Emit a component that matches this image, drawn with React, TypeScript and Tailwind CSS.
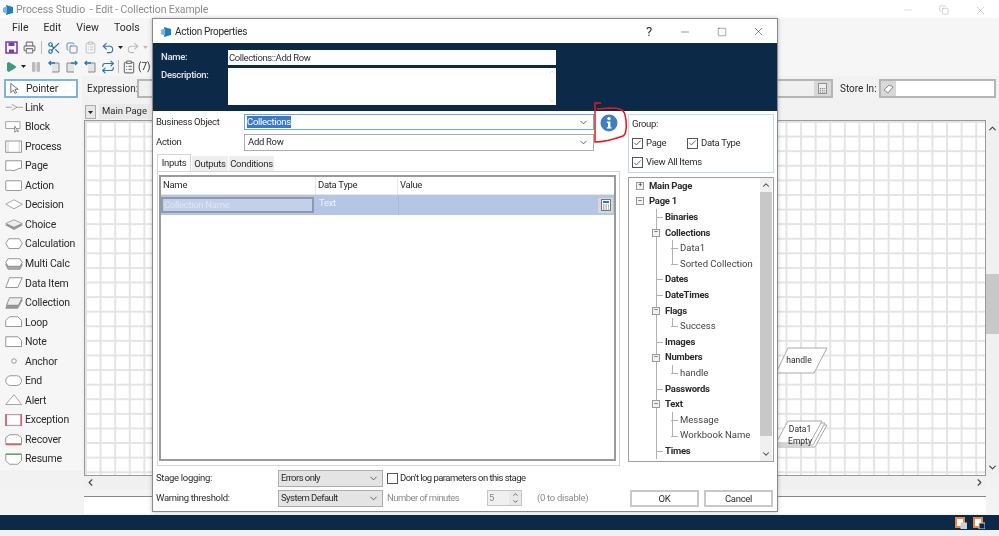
import React from 'react';
import { ChevronDown, ChevronUp, ChevronLeft, ChevronRight, Check, Minus, Square, X, Printer, Scissors, Copy, ClipboardList, Undo2, Redo2, Play, Pause, Repeat } from 'lucide-react';

const ink = '#2b2b2b';

const BpLogo = () => (
    <svg width="12" height="12" viewBox="0 0 12 12" className="shrink-0">
        <path d="M4 1 L11 3 L11 9 L4 11 Z" fill="#1f7fb8" />
        <path d="M1 4 L5 2 L5 10 L1 8 Z" fill="#7fb4d6" />
    </svg>
);

const shapes: Record<string, React.ReactNode> = {
    Link: <><path d="M1 8H9M16 8H24" stroke="#888" fill="none" /><path d="M9 4 L16 8 L9 12" stroke="#888" fill="none" /></>,
    Block: <><rect x="1" y="2" width="19" height="9" fill="#fff" stroke="#888" /><path d="M13 8 L13 16 L15 14 L18 15Z" fill="#fff" stroke="#666" /></>,
    Process: <><rect x="1" y="1" width="21" height="15" fill="#fff" stroke="#777" /><path d="M4 1V16M19 1V16" stroke="#bbb" /></>,
    Page: <path d="M1 2H22V12C17 11 15 16 10 15C6 14 4 15 1 15Z" fill="#fff" stroke="#777" />,
    Action: <rect x="1" y="2" width="21" height="13" rx="1" fill="#fff" stroke="#777" />,
    Decision: <path d="M1 8 L12 2 L23 8 L12 14Z" fill="#fff" stroke="#888" />,
    Choice: <><path d="M1 9 L12 4 L23 9 L12 15Z" fill="#999" stroke="#888" /><path d="M1 7 L12 2 L23 7 L12 12Z" fill="#eee" stroke="#888" /></>,
    Calculation: <path d="M5 2H19L23 8L19 15H5L1 8Z" fill="#fff" stroke="#777" />,
    'Multi Calc': <><path d="M4 5H20L23 10L20 16H4L1 10Z" fill="#aaa" stroke="#888" /><path d="M4 2H20L23 7L20 12H4L1 7Z" fill="#fff" stroke="#777" /></>,
    'Data Item': <path d="M6 2H23L17 15H1Z" fill="#fff" stroke="#777" />,
    Collection: <><path d="M6 5H23L17 16H1Z" fill="#999" stroke="#888" /><path d="M6 2H23L18 12H2Z" fill="#eee" stroke="#777" /></>,
    Loop: <path d="M6 2H17L22 7V15H1V7Z" fill="#fff" stroke="#777" />,
    Note: <path d="M1 2H17L22 7V15H1Z" fill="#fff" stroke="#777" />,
    Anchor: <circle cx="12" cy="9" r="3" fill="#fff" stroke="#777" />,
    End: <rect x="1" y="2" width="21" height="13" rx="6.5" fill="#fff" stroke="#777" />,
    Alert: <path d="M12 2L22 15H1Z" fill="#fff" stroke="#888" />,
    Exception: <><rect x="1" y="2" width="21" height="14" fill="#fff" stroke="#777" /><path d="M1.5 1V17M21.5 1V17" stroke="#e05561" strokeWidth="2" /></>,
    Recover: <><path d="M6 2H17L22 6V14H1V6Z" fill="#fff" stroke="#777" /><path d="M1 15H22" stroke="#e05561" strokeWidth="2" /></>,
    Resume: <><path d="M1 3H22V11L17 16H6L1 11Z" fill="#fff" stroke="#777" /><path d="M1 2.5H22" stroke="#5aa469" strokeWidth="2" /></>,
};

const paletteItems = Object.keys(shapes);

const Palette = () => (
    <div className="w-[82px] shrink-0 bg-[#f6f6f6] flex flex-col pt-[3px] h-[394px] text-[10.5px] tracking-[-0.2px]">
        <div className="mx-[4px] h-[19px] w-[74px] shrink-0 border-2 border-[#7fb4e0] bg-white flex items-center pl-[4px] gap-[7px]">
            <svg width="9" height="13" viewBox="0 0 11 14"><path d="M1 1V12L4 9L6 13L8 12L6 8H10Z" fill="#fff" stroke="#555" /></svg>
            Pointer
        </div>
        {paletteItems.map((name) => (
            <div key={name} className="h-[19.53px] shrink-0 flex items-center pl-[5px] gap-[2px] whitespace-nowrap">
                <svg width="18" height="14" viewBox="0 0 24 18" className="shrink-0">{shapes[name]}</svg>
                <span>{name}</span>
            </div>
        ))}
    </div>
);

const ToolIcon = ({ children, className = '' }: { children: React.ReactNode; className?: string }) => (
    <span className={`w-[16px] h-[16px] flex items-center justify-center shrink-0 ${className}`}>{children}</span>
);

const Caret = ({ fill = '#222' }: { fill?: string }) => (
    <svg width="5" height="3" viewBox="0 0 5 3" className="shrink-0"><path d="M0 0H5L2.5 3Z" fill={fill} /></svg>
);

const StepIcon = ({ flip = false }: { flip?: boolean }) => (
    <svg width="14" height="14" viewBox="0 0 14 14" className={flip ? '-scale-x-100' : ''}>
        <path d="M5 3H12V12H5" fill="#e4e4e4" stroke="#888" />
        <path d="M8 3H2M4 1L2 3L4 5" fill="none" stroke="#2778b5" strokeWidth="1.4" />
    </svg>
);

const Toolbars = () => (
    <div className="bg-[#f6f6f6] h-[38px] pl-[3px] flex flex-col">
        <div className="h-[19px] flex items-center gap-[2px]">
            <ToolIcon>
                <svg width="13" height="13" viewBox="0 0 13 13"><path d="M1 1H12V12H1Z" fill="none" stroke="#7a3fa8" strokeWidth="1.6" /><path d="M3.5 1.5H9.5V5H3.5Z M4 8.5H9V12H4Z" fill="#7a3fa8" /></svg>
            </ToolIcon>
            <ToolIcon><Printer size={13} color="#777" /></ToolIcon>
            <span className="w-px h-[13px] bg-[#bbb] mx-[2px]" />
            <ToolIcon><Scissors size={14} color="#1f6fa8" /></ToolIcon>
            <ToolIcon><Copy size={12} color="#6f8aa8" /></ToolIcon>
            <ToolIcon><ClipboardList size={13} color="#c4c4c4" /></ToolIcon>
            <ToolIcon><Undo2 size={14} color="#2778b5" /></ToolIcon>
            <Caret />
            <ToolIcon><Redo2 size={14} color="#bcbcbc" /></ToolIcon>
            <Caret fill="#bbb" />
        </div>
        <div className="h-[19px] flex items-center gap-[2px]">
            <ToolIcon><Play size={12} color="#3f9a7d" fill="#3f9a7d" /></ToolIcon>
            <Caret />
            <ToolIcon><Pause size={12} color="#bbb" fill="#bbb" /></ToolIcon>
            <ToolIcon><StepIcon /></ToolIcon>
            <ToolIcon><StepIcon flip /></ToolIcon>
            <ToolIcon><StepIcon /></ToolIcon>
            <ToolIcon><Repeat size={14} color="#2778b5" /></ToolIcon>
            <span className="w-px h-[13px] bg-[#bbb]" />
            <ToolIcon><ClipboardList size={14} color="#777" /></ToolIcon>
            <span className="text-[10px] -ml-[1px]">(7)</span>
        </div>
    </div>
);

const Stage = ({ children, className }: { children: React.ReactNode; className: string }) => (
    <div className={`absolute text-[8.5px] text-center leading-[12px] ${className}`}>{children}</div>
);

const Canvas = () => (
    <div className="flex-1 flex flex-col min-w-0">
        <div className="h-[24px] flex items-center pl-[5px] pr-[3px] text-[10px] whitespace-nowrap">
            <span className="w-[50px]">Expression:</span>
            <div className="flex-1 h-[19px] border-2 border-[#b5b5b5] bg-[#f0f0f0] flex justify-end">
                <span className="w-[17px] bg-[#d8d8d8] flex items-center justify-center">
                    <svg width="9" height="11" viewBox="0 0 10 12"><rect x="0.5" y="0.5" width="9" height="11" fill="#eee" stroke="#888" /><path d="M2 6H8M2 8H8M2 10H8" stroke="#777" strokeDasharray="1.5 1" /></svg>
                </span>
            </div>
            <span className="w-[46px] pl-[7px]">Store In:</span>
            <div className="w-[117px] h-[19px] border-2 border-[#b5b5b5] bg-white">
                <div className="w-[15px] h-full bg-[#d8d8d8] flex items-center justify-center">
                    <svg width="11" height="11" viewBox="0 0 11 11"><path d="M1 7L6 2L10 4L5 10Z" fill="#fff" stroke="#888" /></svg>
                </div>
            </div>
        </div>
        <div className="h-[20px] flex items-end pl-[3px] gap-[3px] pb-[1px] text-[9.5px]">
            <div className="w-[11px] h-[14px] bg-[#e6e6e6] border border-[#aaa] flex items-center justify-center">
                <Caret />
            </div>
            <div className="w-[51px] h-[15px] bg-[#e9e9e9] text-center">Main Page</div>
        </div>
        <div className="flex h-[356px]">
            <div className="relative ml-[2px] w-[902px] h-[356px] border border-[#999] bg-white bg-[linear-gradient(to_right,#e4e4e4_2px,transparent_2px),linear-gradient(to_bottom,#e4e4e4_2px,transparent_2px)] bg-size-[14.6px_14.6px]">
                <Stage className="left-[691px] top-[226px] w-[52px] h-[27px]">
                    <svg width="52" height="27" viewBox="0 0 52 27" className="absolute left-0 top-0"><path d="M12 1H51L38 26H0Z" fill="#fff" stroke="#aaa" /></svg>
                    <span className="relative leading-[27px] pr-[6px]">handle</span>
                </Stage>
                <Stage className="left-[691px] top-[299px] w-[52px] h-[28px]">
                    <svg width="52" height="28" viewBox="0 0 52 28" className="absolute left-0 top-0">
                        <path d="M16 5H51L39 27H0Z" fill="#fff" stroke="#aaa" />
                        <path d="M14 3H49L37 25H0Z" fill="#fff" stroke="#aaa" />
                        <path d="M12 1H46L34 23H0Z" fill="#fff" stroke="#aaa" />
                    </svg>
                    <span className="relative block pr-[4px] pt-[3px]">Data1<br />Empty</span>
                </Stage>
            </div>
            <div className="w-[13px] h-[356px] bg-[#f0f0f0] flex flex-col items-center justify-between py-[3px] relative">
                <ChevronUp size={11} strokeWidth={2.5} color="#444" />
                <div className="absolute left-0 top-[154px] w-full h-[60px] bg-[#c8c8c8]" />
                <ChevronDown size={11} strokeWidth={2.5} color="#444" />
            </div>
        </div>
        <div className="h-[13px] ml-[2px] w-[902px] bg-[#f0f0f0] flex items-center justify-between px-[1px]">
            <ChevronLeft size={11} strokeWidth={2.5} color="#444" />
            <ChevronRight size={11} strokeWidth={2.5} color="#444" />
        </div>
    </div>
);

const CheckLabel = ({ label, className = '' }: { label: string; className?: string }) => (
    <div className={`flex items-center gap-[3px] ${className}`}>
        <span className="w-[11px] h-[11px] border border-[#555] bg-white flex items-center justify-center"><Check size={10} color="#333" strokeWidth={2} /></span>
        {label}
    </div>
);

const treeRows: { label: string; level: number; bold?: boolean; box?: '+' | '-'; last?: boolean }[] = [
    { label: 'Main Page', level: 0, bold: true, box: '+' },
    { label: 'Page 1', level: 0, bold: true, box: '-' },
    { label: 'Binaries', level: 1, bold: true },
    { label: 'Collections', level: 1, bold: true, box: '-' },
    { label: 'Data1', level: 2 },
    { label: 'Sorted Collection', level: 2, last: true },
    { label: 'Dates', level: 1, bold: true },
    { label: 'DateTimes', level: 1, bold: true },
    { label: 'Flags', level: 1, bold: true, box: '-' },
    { label: 'Success', level: 2, last: true },
    { label: 'Images', level: 1, bold: true },
    { label: 'Numbers', level: 1, bold: true, box: '-' },
    { label: 'handle', level: 2, last: true },
    { label: 'Passwords', level: 1, bold: true },
    { label: 'Text', level: 1, bold: true, box: '-' },
    { label: 'Message', level: 2 },
    { label: 'Workbook Name', level: 2, last: true },
    { label: 'Times', level: 1, bold: true },
];

const TreeRow = ({ row }: { row: (typeof treeRows)[number] }) => {
    const indent = [20, 36, 51][row.level];
    return (
        <div className="relative h-[15.62px] shrink-0 flex items-center text-[9.5px] tracking-[-0.25px]" style={{ paddingLeft: indent }}>
            {row.level >= 1 && <span className="absolute left-[26.5px] top-0 bottom-0 w-px bg-[#b0b0b0]" />}
            {row.level === 2 && (
                <span className={`absolute left-[42.5px] top-0 w-px bg-[#b0b0b0] ${row.last ? 'h-1/2' : 'h-full'}`} />
            )}
            {row.level >= 1 && !row.box && (
                <span className="absolute top-1/2 h-px w-[7px] bg-[#b0b0b0]" style={{ left: indent - 9 }} />
            )}
            {row.box && (
                <span className="absolute z-10 w-[8px] h-[8px] border border-[#999] bg-[#eef2f7] flex items-center justify-center text-[7px] leading-none" style={{ left: indent - 13 }}>
                    {row.box === '+' ? '+' : '–'}
                </span>
            )}
            <span className={row.bold ? 'font-bold' : 'text-[#444] tracking-[0px]'}>{row.label}</span>
        </div>
    );
};

const Tree = () => (
    <div className="relative mt-[4px] h-[285px] border border-[#a0a0a0] bg-white overflow-hidden flex flex-col">
        {treeRows.map((row) => <TreeRow key={row.label} row={row} />)}
        <div className="absolute right-[1px] top-0 bottom-0 w-[12px] bg-[#f0f0f0] flex flex-col items-center justify-between py-[2px]">
            <ChevronUp size={10} strokeWidth={2.5} color="#444" />
            <ChevronDown size={10} strokeWidth={2.5} color="#444" />
            <div className="absolute top-[14px] left-0 w-full h-[244px] bg-[#c8c8c8]" />
        </div>
    </div>
);

const SelectBox = ({ value, className }: { value: string; className: string }) => (
    <div className={`h-[17px] border border-[#adadad] bg-[#e4e4e4] flex items-center justify-between pl-[2px] pr-[3px] tracking-[-0.55px] ${className}`}>
        {value}
        <ChevronDown size={11} color="#555" />
    </div>
);

const InfoBadge = () => (
    <svg width="18" height="18" viewBox="0 0 18 18" className="shrink-0 ml-[6px]">
        <circle cx="9" cy="9" r="8.5" fill="#3f7fbf" />
        <circle cx="9" cy="4.6" r="1.7" fill="#fff" />
        <path d="M6.8 7.5H10.4V13.2H11.5V14.6H6.8V13.2H8V8.9H6.8Z" fill="#fff" />
    </svg>
);

const ActionDialog = () => (
    <div className="absolute left-[152px] top-[18px] w-[626px] h-[494px] bg-white border border-[#8a8a8a] shadow-[0_0_4px_rgba(0,0,0,0.25)] flex flex-col text-[9.5px] tracking-[-0.3px]">
        <div className="h-[24px] shrink-0 flex items-center pl-[7px] pt-px text-[10px] tracking-[-0.3px]">
            <BpLogo />
            <span className="flex-1 ml-[3px]">Action Properties</span>
            <span className="w-[36px] text-center text-[13px]">?</span>
            <span className="w-[36px] flex justify-center"><Minus size={12} strokeWidth={1} /></span>
            <span className="w-[37px] flex justify-center"><Square size={10} strokeWidth={1} /></span>
            <span className="w-[37px] flex justify-center"><X size={13} strokeWidth={1} /></span>
        </div>
        <div className="h-[68px] shrink-0 bg-[#0c2a47] pl-[8px] pt-[7px] text-[#e2e8ef] font-medium">
            <div className="flex items-center h-[15px]">
                <span className="w-[67px]">Name:</span>
                <div className="w-[328px] h-[15px] bg-white text-[#333] font-normal pl-[1px] leading-[15px] tracking-[-0.4px]">Collections::Add Row</div>
            </div>
            <div className="flex mt-[3px]">
                <span className="w-[67px]">Description:</span>
                <div className="w-[328px] h-[37px] bg-white flex flex-col items-end justify-between">
                    <ChevronUp size={8} color="#ccc" />
                    <ChevronDown size={8} color="#ccc" />
                </div>
            </div>
        </div>
        <div className="flex-1 flex min-h-0">
            <div className="w-[475px] shrink-0 flex flex-col">
                <div className="flex items-start h-[16px] mt-[3px] pl-[3px]">
                    <span className="w-[88px] h-[16px] leading-[16px]">Business Object</span>
                    <div className="w-[350px] h-[16px] border border-[#6fa8dc] flex items-center justify-between pl-[2px] pr-[4px]">
                        <span className="bg-[#3d78c8] text-white leading-[12px]">Collections</span>
                        <ChevronDown size={11} color="#555" />
                    </div>
                    <InfoBadge />
                </div>
                <div className="flex items-center h-[17px] mt-[4px] pl-[3px]">
                    <span className="w-[88px]">Action</span>
                    <div className="w-[350px] h-[17px] border border-[#adadad] flex items-center justify-between pl-[3px] pr-[4px]">
                        Add Row
                        <ChevronDown size={11} color="#555" />
                    </div>
                </div>
                <div className="flex items-end h-[20px] pl-[4px]">
                    <div className="w-[34px] h-[17px] bg-white border border-b-0 border-[#d5d5d5] text-center leading-[15px]">Inputs</div>
                    <div className="w-[36px] h-[15px] bg-[#eeeeee] ml-[1px] text-center leading-[16px]">Outputs</div>
                    <div className="w-[45px] h-[15px] bg-[#eeeeee] ml-[1px] text-center leading-[16px]">Conditions</div>
                </div>
                <div className="ml-[4px] w-[463px] h-[295px] border border-[#d5d5d5] pt-[3px] px-[1px]">
                    <div className="w-[457px] h-[286px] border-2 border-[#9a9a9a] bg-white">
                        <div className="h-[18px] flex leading-[15px] border-b border-[#e6e6e6]">
                            <span className="w-[155px] pl-[2px] border-r border-[#e6e6e6]">Name</span>
                            <span className="w-[82px] pl-[2px] border-r border-[#e6e6e6]">Data Type</span>
                            <span className="pl-[2px]">Value</span>
                        </div>
                        <div className="h-[20px] bg-[#b4c6e4] flex items-center text-[#eef2f8]">
                            <div className="w-[153px] h-[16px] border-2 border-[#8f9aac] bg-[#c2d0e9] leading-[12px] pl-[1px] text-[#dfe6f2]">Collection Name</div>
                            <span className="w-[84px] pl-[5px] mb-[3px]">Text</span>
                            <div className="flex-1 h-full border-l border-[#a9bbd9] flex justify-end items-center pr-[1px]">
                                <span className="w-[15px] h-[15px] bg-[#d8d8d8] flex items-center justify-center">
                                    <svg width="10" height="12" viewBox="0 0 10 12"><rect x="0.5" y="0.5" width="9" height="11" fill="#fff" stroke="#777" /><rect x="2" y="2" width="6" height="2" fill="#2778b5" /><path d="M2 6H8M2 8H8M2 10H8" stroke="#777" strokeDasharray="1.5 1" /></svg>
                                </span>
                            </div>
                        </div>
                    </div>
                </div>
                <div className="mt-[4px] flex items-center h-[16px] pl-[3px]">
                    <span className="w-[122px]">Stage logging:</span>
                    <SelectBox value="Errors only" className="w-[105px]" />
                    <span className="w-[11px] h-[11px] border border-[#555] ml-[4px] mr-[2px]" />
                    <span className="tracking-[-0.55px]">Don't log parameters on this stage</span>
                </div>
                <div className="mt-[4px] flex items-center h-[16px] pl-[3px]">
                    <span className="w-[122px]">Warning threshold:</span>
                    <SelectBox value="System Default" className="w-[105px]" />
                    <span className="text-[#8a8a8a] ml-[4px] w-[100px] tracking-[-0.55px]">Number of minutes</span>
                    <div className="w-[35px] h-[16px] border border-[#c4c4c4] bg-[#f0f0f0] flex justify-between pl-[1px] text-[#888]">
                        5
                        <span className="w-[12px] flex flex-col items-center justify-center bg-[#e8e8e8]">
                            <ChevronUp size={7} strokeWidth={3} color="#555" />
                            <ChevronDown size={7} strokeWidth={3} color="#555" />
                        </span>
                    </div>
                    <span className="text-[#8a8a8a] ml-[15px]">(0 to disable)</span>
                </div>
            </div>
            <div className="w-[146px] shrink-0 pt-[3px] flex flex-col">
                <div className="h-[59px] border border-[#c9d7e8] pl-[3px] pt-px">
                    <div className="h-[16px] leading-[16px]">Group:</div>
                    <div className="flex h-[20px] mt-[1px]">
                        <CheckLabel label="Page" className="w-[55px]" />
                        <CheckLabel label="Data Type" />
                    </div>
                    <CheckLabel label="View All Items" className="h-[19px]" />
                </div>
                <Tree />
                <div className="flex justify-between mt-[28px] pl-[2px] pr-[1px]">
                    <div className="w-[69px] h-[17px] border-2 border-[#c8c8c8] text-center leading-[13px]">OK</div>
                    <div className="w-[69px] h-[17px] border-2 border-[#c8c8c8] text-center leading-[13px]">Cancel</div>
                </div>
            </div>
        </div>
    </div>
);

export default function App() {
    return (
        <div className="relative w-[999px] h-[536px] overflow-hidden bg-white blur-[0.4px]" style={{ fontFamily: 'Roboto, "Noto Sans", sans-serif', color: ink }}>
            <div className="h-[18px] flex items-center pl-[2px] pt-[2px] text-[10.5px] tracking-[-0.1px] text-[#8c8c8c]">
                <BpLogo />
                <span className="flex-1 ml-[2px] whitespace-pre">Process Studio  - Edit - Collection Example</span>
                <span className="w-[36px] flex justify-center"><Minus size={12} strokeWidth={1} color="#bbb" /></span>
                <span className="w-[36px] flex justify-center"><Copy size={10} strokeWidth={1} color="#999" /></span>
                <span className="w-[36px] mr-px flex justify-center"><X size={13} strokeWidth={1} color="#aaa" /></span>
            </div>
            <div className="h-[20px] bg-[#f6f6f6] flex items-center pl-[12px] gap-[15px] text-[10.5px]">
                <span>File</span><span>Edit</span><span>View</span><span>Tools</span><span>De</span>
            </div>
            <Toolbars />
            <div className="flex bg-[#f2f2f2] h-[413px]">
                <Palette />
                <Canvas />
            </div>
            <div className="h-[26px] bg-[#f3f3f3] flex items-end pb-[1px] pl-[84px] pr-[13px]">
                <div className="flex-1 h-[18px] bg-white border-t border-[#888]" />
            </div>
            <div className="h-[15px] bg-[#0c2a47] flex items-center justify-end gap-[6px] pr-[14px]">
                {[0, 1].map((i) => (
                    <svg key={i} width="12" height="12" viewBox="0 0 12 12">
                        <path d="M1 1H9V10H1Z" fill="#fff" stroke="#e8883a" strokeWidth="2" />
                        <rect x="6" y="6" width="6" height="6" fill={i === 0 ? '#c9d3dc' : '#0c2a47'} stroke="#c9d3dc" />
                    </svg>
                ))}
            </div>
            <div className="h-[6px] bg-[#f0f0f0]" />
            <ActionDialog />
            <svg width="40" height="45" viewBox="0 0 40 45" className="absolute left-[592px] top-[100px]">
                <path d="M9 3 L3 3 L3 42 C10 42 20 40 31 36 C35 34 35 22 33 15 C32 9 26 8 18 8 L5 9" fill="none" stroke="#e2181f" strokeWidth="1.5" />
            </svg>
        </div>
    );
}
